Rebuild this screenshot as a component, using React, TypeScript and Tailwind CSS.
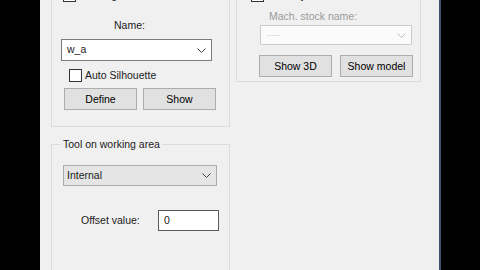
import React from 'react';

const Chevron = ({ color = '#404040' }: { color?: string }) => (
  <svg width="9" height="5" viewBox="0 0 9 5" fill="none">
    <path d="M0.5 0.5 L4.5 4.5 L8.5 0.5" stroke={color} strokeWidth="1" />
  </svg>
);

const CheckBox = () => <div className="w-[13px] h-[13px] shrink-0 bg-white border border-[#333]" />;

const WinButton = ({ label }: { label: string }) => (
  <button className="h-[22px] w-[73px] bg-[#e1e1e1] border border-[#adadad] text-black leading-none">
    {label}
  </button>
);

export default function App() {
  return (
    <div
      className="flex w-[480px] h-[270px] overflow-hidden bg-black text-[10.5px] text-[#1a1a1a]"
      style={{ fontFamily: '"Liberation Sans", Arial, sans-serif' }}
    >
      <div className="w-[40px] shrink-0" />
      <div className="w-[401px] shrink-0 h-full bg-[#f0f0f0] border-r-2 border-[#46516b] flex items-start pl-[11px] overflow-hidden">
        {/* left column */}
        <div className="w-[179px] shrink-0 flex flex-col -mt-[20px]">
          <div className="border border-[#dcdcdc] pt-[8px] pb-[16px] flex flex-col">
            <div className="flex items-center gap-[3px] ml-[11px] h-[13px]">
              <CheckBox />
              <span className="leading-[13px]">Working area</span>
            </div>
            <div className="ml-[62px] mt-[16px] leading-[14px]">Name:</div>
            <div className="ml-[9px] mt-[7px] w-[151px] h-[22px] bg-white border border-[#7a7a7a] flex items-center justify-between pl-[5px] pr-[5px]">
              <span>w_a</span>
              <Chevron />
            </div>
            <div className="flex items-center gap-[3px] ml-[17px] mt-[8px] h-[13px]">
              <CheckBox />
              <span>Auto Silhouette</span>
            </div>
            <div className="flex gap-[6px] ml-[12px] mt-[6px]">
              <WinButton label="Define" />
              <WinButton label="Show" />
            </div>
          </div>
          {/* group box with caption in its top border */}
          <div className="mt-[10px] flex items-center h-[14px]">
            <div className="w-[10px] self-center h-px bg-[#dcdcdc]" />
            <span className="px-[2px] leading-[14px]">Tool on working area</span>
            <div className="flex-1 h-px bg-[#dcdcdc]" />
          </div>
          <div className="-mt-[7px] border-l border-r border-[#dcdcdc] pt-[7px] pb-[60px] flex flex-col">
            <div className="ml-[11px] mt-[14px] w-[154px] h-[21px] bg-[#e5e5e5] border border-[#acacac] flex items-center justify-between pl-[3px] pr-[5px]">
              <span>Internal</span>
              <Chevron />
            </div>
            <div className="flex items-center ml-[29px] mt-[24px]">
              <span className="w-[77px]">Offset value:</span>
              <div className="w-[61px] h-[21px] bg-white border border-[#5a5a5a] flex items-center pl-[5px]">0</div>
            </div>
          </div>
        </div>
        {/* right column */}
        <div className="w-[185px] shrink-0 ml-[6px] -mt-[20px] border border-[#dcdcdc] pt-[8px] pb-[4px] flex flex-col">
          <div className="flex items-center gap-[3px] ml-[14px] h-[13px]">
            <CheckBox />
            <span>Get only the Rest material</span>
          </div>
          <div className="ml-[32px] mt-[7px] leading-[14px] text-[#9a9a9a]">Mach. stock name:</div>
          <div className="ml-[23px] mt-[2px] w-[152px] h-[20px] bg-[#fbfbfb] border border-[#cccccc] flex items-center justify-between pl-[6px] pr-[5px]">
            <span className="text-[#dadada]">----</span>
            <Chevron color="#bdbdbd" />
          </div>
          <div className="flex gap-[8px] ml-[22px] mt-[10px]">
            <WinButton label="Show 3D" />
            <WinButton label="Show model" />
          </div>
        </div>
      </div>
    </div>
  );
}
